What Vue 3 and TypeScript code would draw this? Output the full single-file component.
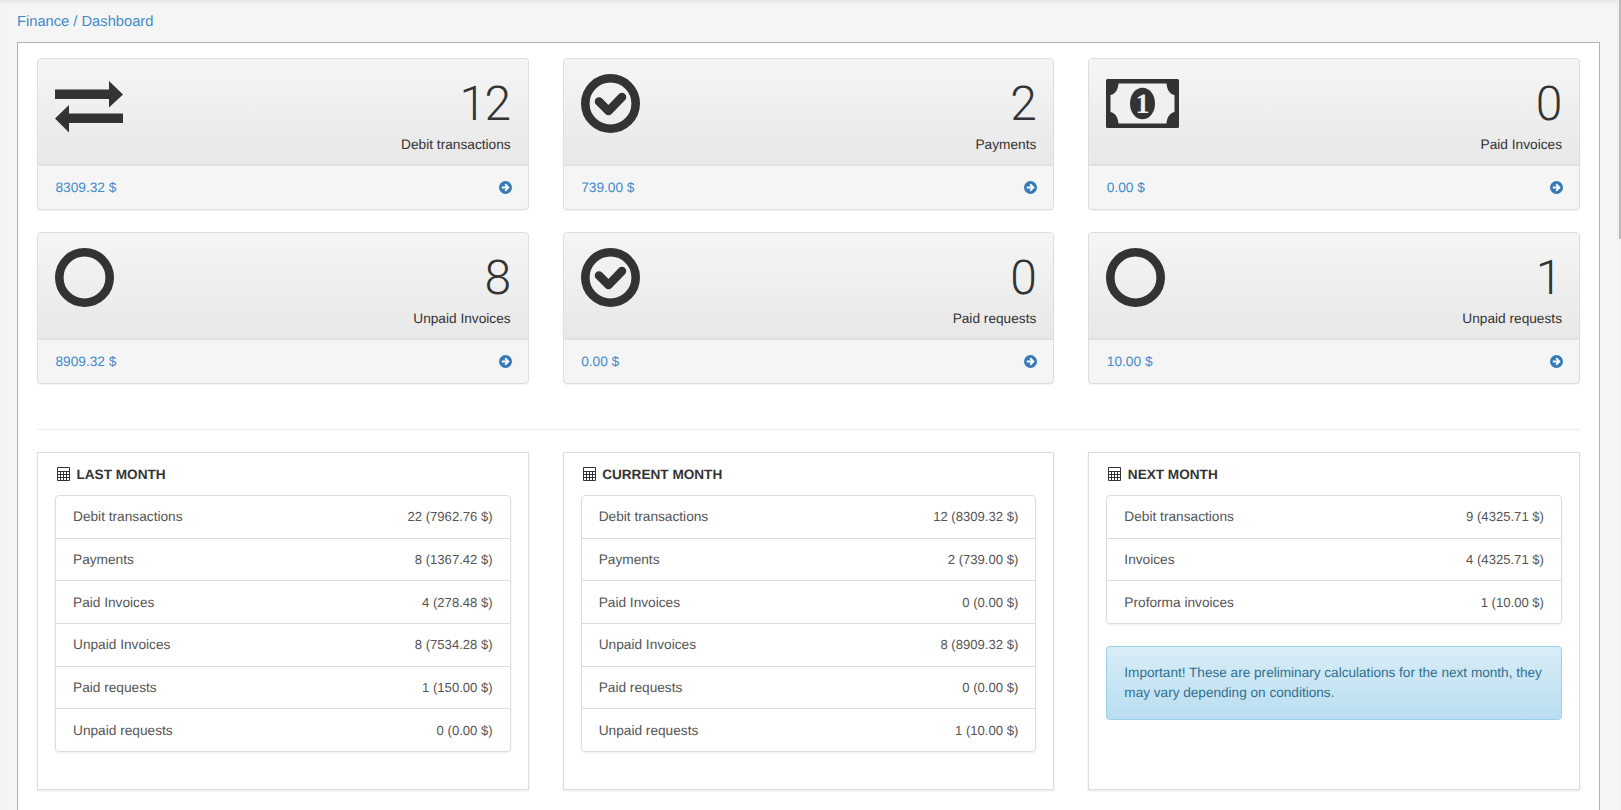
<template>
  <div class="page">
    <div class="crumbs"><a>Finance</a> / <a>Dashboard</a></div>
    <div class="box">
      <div class="stats">
        <div v-for="s in stats" :key="s.label" class="stat">
          <div class="stat-head">
            <svg v-if="s.icon === 'transfer'" class="ico-transfer" width="68" height="52" viewBox="0 0 68 52">
              <path fill="#333" d="M0 8.500h54V0l14 13.500L54 26.500V18H0zM68 32.500H14V24L0 37.500 14 51.500V42h54z" />
            </svg>
            <svg v-else-if="s.icon === 'check'" class="ico-round" width="59" height="59" viewBox="0 0 59 59">
              <circle cx="29.500" cy="29.500" r="25.200" fill="none" stroke="#333" stroke-width="8.600" />
              <path fill="none" stroke="#333" stroke-width="8.500" stroke-linejoin="round" stroke-linecap="round" d="M18 27.500l9.500 9.500 13.500-14" />
            </svg>
            <svg v-else-if="s.icon === 'money'" class="ico-money" width="73" height="49" viewBox="0 0 73 49">
              <rect width="73" height="49" rx="1.500" fill="#333" />
              <path fill="#f0f0f0" d="M12.500 4.500h48c.5 6 3 10.500 8 11.500v17c-5 1-7.500 5.500-8 11.500h-48c-.5-6-3-10.500-8-11.500V16c5-1 7.500-5.500 8-11.500z" />
              <ellipse cx="36.500" cy="24.500" rx="12.500" ry="15.800" fill="#333" />
              <text x="36.500" y="34" text-anchor="middle" class="bill-one">1</text>
            </svg>
            <svg v-else class="ico-round" width="59" height="59" viewBox="0 0 59 59">
              <circle cx="29.500" cy="29.500" r="25.200" fill="none" stroke="#333" stroke-width="8.600" />
            </svg>
            <div class="stat-text">
              <div class="stat-num">{{ s.count }}</div>
              <div class="stat-label">{{ s.label }}</div>
            </div>
          </div>
          <div class="stat-foot">
            <a>{{ s.sum }}</a>
            <svg width="13" height="13" viewBox="0 0 13 13">
              <circle cx="6.500" cy="6.500" r="6.500" fill="#337ab7" />
              <path fill="#fff" d="M6.800 2.600L10.700 6.500 6.800 10.400 5.500 9.100 7.100 7.500H2.800v-2h4.300L5.500 3.900z" />
            </svg>
          </div>
        </div>
      </div>
      <hr class="split" />
      <div class="months">
        <div v-for="m in months" :key="m.title" class="month">
          <h4 class="month-title">
            <svg width="13" height="14" viewBox="0 0 13 14">
              <path fill="none" stroke="#333" d="M.5.500h12v13H.5zM.5 4.500h12M.5 7.500h12M.5 10.500h12M3.500 4.500v9M6.500 4.500v9M9.500 4.500v9" />
            </svg>
            {{ m.title }}
          </h4>
          <ul class="list">
            <li v-for="r in m.rows" :key="r[0]"><span>{{ r[0] }}</span><span class="val">{{ r[1] }}</span></li>
          </ul>
          <div v-if="m.note" class="note">{{ m.note }}</div>
        </div>
      </div>
    </div>
    <div class="scroll-thumb"></div>
  </div>
</template>

<script setup lang="ts">
type Stat = { icon: string; count: number; label: string; sum: string }
type Month = { title: string; rows: [string, string][]; note?: string }

const stats: Stat[] = [
  { icon: 'transfer', count: 12, label: 'Debit transactions', sum: '8309.32 $' },
  { icon: 'check', count: 2, label: 'Payments', sum: '739.00 $' },
  { icon: 'money', count: 0, label: 'Paid Invoices', sum: '0.00 $' },
  { icon: 'circle', count: 8, label: 'Unpaid Invoices', sum: '8909.32 $' },
  { icon: 'check', count: 0, label: 'Paid requests', sum: '0.00 $' },
  { icon: 'circle', count: 1, label: 'Unpaid requests', sum: '10.00 $' },
]

const months: Month[] = [
  {
    title: 'LAST MONTH',
    rows: [
      ['Debit transactions', '22 (7962.76 $)'],
      ['Payments', '8 (1367.42 $)'],
      ['Paid Invoices', '4 (278.48 $)'],
      ['Unpaid Invoices', '8 (7534.28 $)'],
      ['Paid requests', '1 (150.00 $)'],
      ['Unpaid requests', '0 (0.00 $)'],
    ],
  },
  {
    title: 'CURRENT MONTH',
    rows: [
      ['Debit transactions', '12 (8309.32 $)'],
      ['Payments', '2 (739.00 $)'],
      ['Paid Invoices', '0 (0.00 $)'],
      ['Unpaid Invoices', '8 (8909.32 $)'],
      ['Paid requests', '0 (0.00 $)'],
      ['Unpaid requests', '1 (10.00 $)'],
    ],
  },
  {
    title: 'NEXT MONTH',
    rows: [
      ['Debit transactions', '9 (4325.71 $)'],
      ['Invoices', '4 (4325.71 $)'],
      ['Proforma invoices', '1 (10.00 $)'],
    ],
    note: 'Important! These are preliminary calculations for the next month, they may vary depending on conditions.',
  },
]
</script>

<style>
html,
body {
  margin: 0;
  height: 100%;
  overflow: hidden;
  background: #f5f5f5;
}
</style>

<style scoped>
.page {
  position: relative;
  height: 810px;
  overflow: hidden;
  box-sizing: border-box;
  padding: 0 21px 0 17px;
  font-family: "Liberation Sans", Arial, sans-serif;
  font-size: 13.7px;
  text-rendering: geometricPrecision;
  color: #333;
  background: #f5f5f5;
  box-shadow: inset 0 4px 4px -2px rgba(0, 0, 0, 0.07);
}

.crumbs {
  height: 42px;
  line-height: 44px;
  font-size: 14.7px;
  color: #428bca;
}

.box {
  background: #fff;
  border: 1px solid #b3b3b3;
  padding: 15px 19px 0;
  height: 900px;
}

.stats,
.months {
  display: grid;
  grid-template-columns: repeat(3, 1fr);
  column-gap: 34px;
}

.stats {
  row-gap: 22px;
}

.stat {
  border: 1px solid #ddd;
  border-radius: 4px;
  box-shadow: 0 1px 1px rgba(0, 0, 0, 0.05);
  background: #f5f5f5;
}

.stat-head {
  height: 107px;
  padding: 15px 17px 0;
  box-sizing: border-box;
  display: flex;
  justify-content: space-between;
  align-items: flex-start;
  background: linear-gradient(#f5f5f5, #e8e8e8);
  border-bottom: 2px solid #e1e1e1;
  border-radius: 3px 3px 0 0;
}

.ico-transfer {
  margin-top: 7px;
}

.ico-money {
  margin-top: 5px;
}

.bill-one {
  font-family: "Liberation Serif", serif;
  font-weight: 700;
  font-size: 28px;
  fill: #f0f0f0;
}

.stat-text {
  margin-top: 2px;
  text-align: right;
}

.stat-num {
  font-family: Roboto, "Liberation Sans", sans-serif;
  font-weight: 300;
  font-size: 48px;
  letter-spacing: -1.5px;
  line-height: 56px;
  height: 56px;
  margin-right: 1px;
}

.stat-label {
  margin-top: 3px;
  line-height: 20px;
}

.stat-foot {
  height: 43px;
  padding: 0 16px 0 17.500px;
  display: flex;
  align-items: center;
  justify-content: space-between;
  color: #428bca;
}

.split {
  border: 0;
  border-top: 1px solid #eee;
  margin: 45px 0 22px;
}

.month {
  height: 338px;
  box-sizing: border-box;
  padding: 0 17px;
  border: 1px solid #ddd;
  box-shadow: 0 1px 2px rgba(0, 0, 0, 0.1);
}

.month-title {
  margin: 0;
  height: 42px;
  display: flex;
  align-items: center;
  gap: 6.500px;
  font-size: 13.6px;
  font-weight: 700;
  padding-left: 2px;
}

.list {
  list-style: none;
  margin: 0;
  padding: 0;
  border: 1px solid #ddd;
  border-radius: 4px;
  box-shadow: 0 1px 2px rgba(0, 0, 0, 0.08);
  color: #555;
}

.list li {
  display: flex;
  justify-content: space-between;
  height: 41.7px;
  padding: 0 17px;
  align-items: center;
  border-top: 1px solid #ddd;
}

.list li:first-child {
  border-top: 0;
}

.val {
  font-size: 13.1px;
}

.note {
  margin-top: 22px;
  padding: 16px 14px 16px 17px;
  font-size: 13.6px;
  line-height: 20px;
  border: 1px solid #9acfea;
  border-radius: 4px;
  color: #31708f;
  background: linear-gradient(#d9edf7, #b9def0);
}

/* thin custom scrollbar on the right edge */
.scroll-thumb {
  position: absolute;
  top: 0;
  right: 0;
  width: 2px;
  height: 239px;
  background: #bbb;
  border-left: 2px solid #f0f0f0;
}
</style>
